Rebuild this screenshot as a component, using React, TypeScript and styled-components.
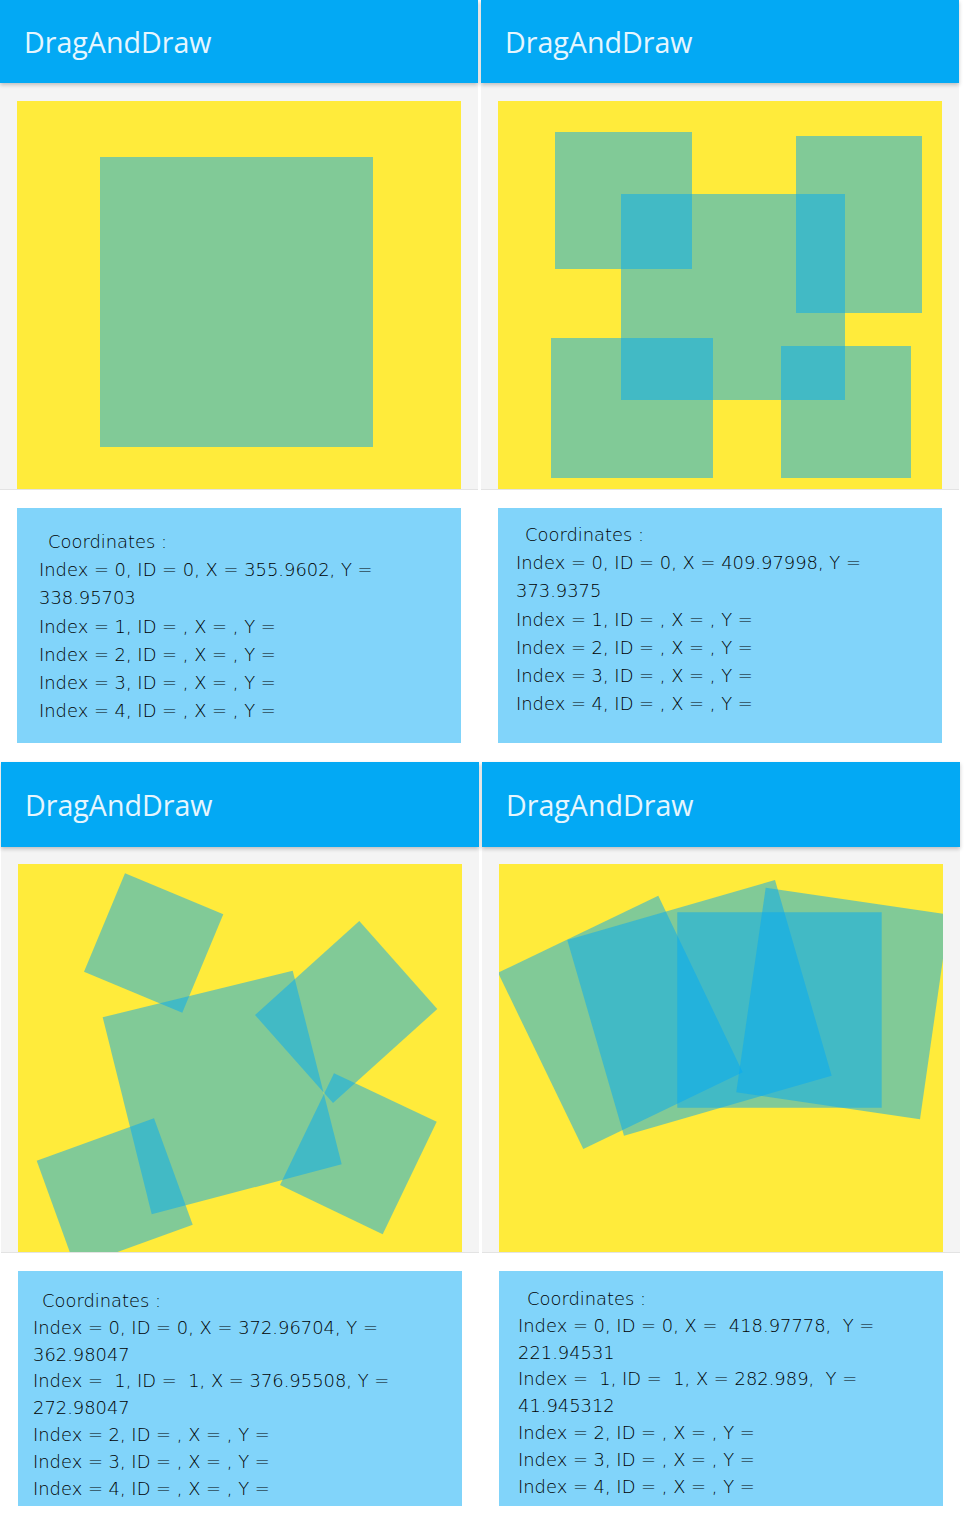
import React from "react";
import styled, { createGlobalStyle } from "styled-components";

const GlobalStyle = createGlobalStyle`
  html, body { margin: 0; padding: 0; background: #ffffff; }
  body { width: 964px; height: 1519px; overflow: hidden; }
`;

const Page = styled.div`
  width: 964px;
  height: 1519px;
  overflow: hidden;
  background: #ffffff;
  display: flex;
  flex-direction: column;
`;

const Row = styled.div<{ $shift: number }>`
  display: flex;
  gap: 3px;
  padding-left: ${(p) => p.$shift}px;
`;

const Panel = styled.section`
  width: 478px;
  display: flex;
  flex-direction: column;
  background: #ffffff;
`;

const Header = styled.header<{ $h: number }>`
  height: ${(p) => p.$h}px;
  flex: none;
  background: #03a9f4;
  display: flex;
  align-items: center;
  padding-left: 24px;
  font-family: "Open Sans", "Noto Sans", sans-serif;
  font-size: 28.6px;
  color: #e6f6fe;
  box-shadow: 0 2px 4px rgba(0, 0, 0, 0.22);
  position: relative;
  z-index: 1;
`;

const CanvasArea = styled.div<{ $top: number }>`
  background: #f4f4f4;
  padding: ${(p) => p.$top}px 17px 0 17px;
  border-bottom: 1px solid #e3e3e3;
`;

const Canvas = styled.div`
  height: 388px;
  background: #ffeb3b;
  overflow: hidden;
  display: flex;
`;

const Drawing = styled.svg`
  width: 444px;
  height: 388px;
  display: block;
`;

const TextArea = styled.div<{ $bottom: number }>`
  padding: 18px 17px ${(p) => p.$bottom}px 17px;
  background: #ffffff;
`;

const Box = styled.div<{ $pt: number; $pl: number }>`
  height: 235px;
  box-sizing: border-box;
  background: #81d4fa;
  padding: ${(p) => p.$pt}px 0 0 ${(p) => p.$pl}px;
  font-family: "DejaVu Sans", "Liberation Sans", sans-serif;
  font-weight: 200;
  font-size: 17.9px;
  color: #000000;
  overflow: hidden;
`;

const Line = styled.div<{ $lh: number; $indent?: boolean }>`
  height: ${(p) => p.$lh}px;
  line-height: ${(p) => p.$lh}px;
  white-space: pre;
  padding-left: ${(p) => (p.$indent ? 9 : 0)}px;
`;

type Shape = number[][];

type PanelData = {
  shapes: Shape[];
  lines: string[];
  headerH: number;
  canvasTop: number;
  bottom: number;
  pt: number;
  pl: number;
  lh: number;
};

const rect = (x1: number, y1: number, x2: number, y2: number): Shape => [
  [x1, y1],
  [x2, y1],
  [x2, y2],
  [x1, y2],
];

const empty = (n: number) => `Index = ${n}, ID = , X = , Y =`;

const panelsTop: PanelData[] = [
  {
    shapes: [rect(83, 56, 356, 346)],
    lines: [
      "Coordinates :",
      "Index = 0, ID = 0, X = 355.9602, Y =",
      "338.95703",
      empty(1),
      empty(2),
      empty(3),
      empty(4),
    ],
    headerH: 83,
    canvasTop: 18,
    bottom: 19,
    pt: 20,
    pl: 22,
    lh: 28.2,
  },
  {
    shapes: [
      rect(57, 31, 194, 168),
      rect(298, 35, 424, 212),
      rect(123, 93, 347, 299),
      rect(53, 237, 215, 377),
      rect(283, 245, 413, 377),
    ],
    lines: [
      "Coordinates :",
      "Index = 0, ID = 0, X = 409.97998, Y =",
      "373.9375",
      empty(1),
      empty(2),
      empty(3),
      empty(4),
    ],
    headerH: 83,
    canvasTop: 18,
    bottom: 19,
    pt: 13,
    pl: 18,
    lh: 28.2,
  },
];

const panelsBottom: PanelData[] = [
  {
    shapes: [
      [
        [107, 9.3],
        [205.3, 50.3],
        [164.3, 148.7],
        [66, 107.7],
      ],
      [
        [84.7, 153.3],
        [274.7, 106.7],
        [323.7, 300.3],
        [133.7, 350.3],
      ],
      [
        [341.3, 57],
        [419.3, 145],
        [315, 239],
        [237, 151],
      ],
      [
        [316, 209.3],
        [418.7, 257.7],
        [364.7, 370.3],
        [262, 321],
      ],
      [
        [136, 254.3],
        [174.7, 360.7],
        [57.3, 403.3],
        [18.7, 296.7],
      ],
    ],
    lines: [
      "Coordinates :",
      "Index = 0, ID = 0, X = 372.96704, Y =",
      "362.98047",
      "Index =  1, ID =  1, X = 376.95508, Y =",
      "272.98047",
      empty(2),
      empty(3),
      empty(4),
    ],
    headerH: 85,
    canvasTop: 17,
    bottom: 13,
    pt: 17,
    pl: 15,
    lh: 26.8,
  },
  {
    shapes: [
      [
        [159.3, 31.7],
        [243.7, 208.3],
        [84.3, 285],
        [-1, 108.7],
      ],
      [
        [68.3, 76],
        [276, 16],
        [332.7, 211.7],
        [125, 271.7],
      ],
      rect(178.3, 48.3, 382.7, 243.7),
      [
        [266.7, 23.7],
        [450.3, 50.7],
        [421, 255.3],
        [237.3, 228.3],
      ],
    ],
    lines: [
      "Coordinates :",
      "Index = 0, ID = 0, X =  418.97778,  Y =",
      "221.94531",
      "Index =  1, ID =  1, X = 282.989,  Y =",
      "41.945312",
      empty(2),
      empty(3),
      empty(4),
    ],
    headerH: 85,
    canvasTop: 17,
    bottom: 13,
    pt: 15,
    pl: 19,
    lh: 26.8,
  },
];

function AppPanel({ d }: { d: PanelData }) {
  return (
    <Panel>
      <Header $h={d.headerH}>DragAndDraw</Header>
      <CanvasArea $top={d.canvasTop}>
        <Canvas>
          <Drawing viewBox="0 0 444 388">
            {d.shapes.map((s, i) => (
              <polygon
                key={i}
                points={s.map((p) => p.join(",")).join(" ")}
                fill="#03a9f4"
                fillOpacity={0.5}
              />
            ))}
          </Drawing>
        </Canvas>
      </CanvasArea>
      <TextArea $bottom={d.bottom}>
        <Box $pt={d.pt} $pl={d.pl}>
          {d.lines.map((l, i) => (
            <Line key={i} $lh={d.lh} $indent={i === 0}>
              {l}
            </Line>
          ))}
        </Box>
      </TextArea>
    </Panel>
  );
}

export default function App() {
  return (
    <>
      <GlobalStyle />
      <Page>
        <Row $shift={0}>
          {panelsTop.map((d, i) => (
            <AppPanel key={i} d={d} />
          ))}
        </Row>
        <Row $shift={1}>
          {panelsBottom.map((d, i) => (
            <AppPanel key={i} d={d} />
          ))}
        </Row>
      </Page>
    </>
  );
}
